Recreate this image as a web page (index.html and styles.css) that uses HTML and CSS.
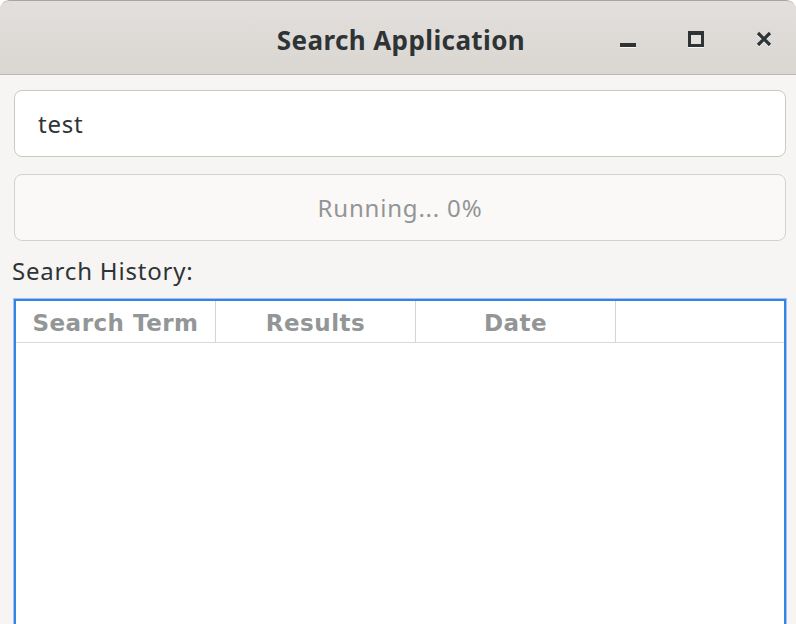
FILE: index.html
```html
<!DOCTYPE html>
<html lang="en">
<head>
    <meta charset="UTF-8">
    <title>Search Application</title>
    <link rel="stylesheet" href="styles.css">
</head>
<body>
    <div class="window">

        <!-- Header bar -->
        <div class="headerbar">
            <div></div>
            <div class="title">Search Application</div>
            <div class="controls">
                <svg class="ctl" width="16" height="18" viewBox="0 0 16 18">
                    <rect x="0" y="13" width="16" height="4" fill="#fff" opacity="0.8"/>
                    <rect x="0" y="12" width="16" height="4" fill="#2e3436"/>
                </svg>
                <svg class="ctl" width="16" height="18" viewBox="0 0 16 18">
                    <rect x="0" y="1" width="16" height="16" fill="#fff" opacity="0.8"/>
                    <rect x="0" y="0" width="16" height="16" fill="#2e3436"/>
                    <rect x="3" y="4" width="10" height="9" fill="#e4e1de"/>
                </svg>
                <svg class="ctl" width="16" height="18" viewBox="0 0 16 18">
                    <path d="M2 2 L14 14 M14 2 L2 14" stroke="#fff" stroke-width="3.2" opacity="0.7" transform="translate(0 1)"/>
                    <path d="M2 2 L14 14 M14 2 L2 14" stroke="#2e3436" stroke-width="3.2"/>
                </svg>
            </div>
        </div>

        <!-- Main content -->
        <div class="content">
            <div class="entry">test</div>
            <div class="progress-btn">Running... 0%</div>
            <div class="label">Search History:</div>

            <div class="history">
                <div class="history-head">
                    <div class="col">Search Term</div>
                    <div class="col">Results</div>
                    <div class="col">Date</div>
                    <div class="col-rest"></div>
                </div>
                <div class="history-body"></div>
            </div>
        </div>
    </div>
</body>
</html>
```

FILE: styles.css
```css
/* Base */
body {
    margin: 0;
    padding: 0;
    background-color: #ffffff;
    font-family: 'Noto Sans', 'Open Sans', sans-serif;
    color: #2e3436;
    overflow: hidden;
}

.window {
    width: 796px;
    height: 624px;
    background-color: #f6f5f4;
    border-radius: 9px 9px 0 0;
    overflow: hidden;
}

/* Header bar */
.headerbar {
    height: 73px;
    display: grid;
    grid-template-columns: 1fr auto 1fr;
    align-items: center;
    background: linear-gradient(#e2dfdc, #dad6d2);
    border-top: 1px solid #a8a6a4;
    border-bottom: 1px solid #bfb8b1;
    border-radius: 9px 9px 0 0;
}

.title {
    font-size: 26px;
    font-weight: bold;
    letter-spacing: 0.4px;
    color: #2e3436;
    padding-top: 4px;
    padding-left: 6px;
}

.controls {
    display: flex;
    justify-content: flex-end;
    align-items: center;
    gap: 52px;
    padding-right: 24px;
    padding-top: 4px;
}

.ctl {
    display: block;
}

/* Content */
.content {
    padding: 15px 10px 0 14px;
}

.entry {
    height: 65px;
    display: flex;
    align-items: center;
    padding-left: 23px;
    background-color: #ffffff;
    border: 1px solid #cdc7c2;
    border-radius: 8px;
    font-size: 24px;
    letter-spacing: 0.8px;
    color: #2e3436;
}

.progress-btn {
    height: 65px;
    margin-top: 17px;
    display: flex;
    align-items: center;
    justify-content: center;
    background-color: #faf9f8;
    border: 1px solid #d5d0cc;
    border-radius: 8px;
    font-size: 24px;
    letter-spacing: 0.8px;
    color: #929595;
}

.label {
    margin: 13px 0 0 -2px;
    height: 43px;
    font-size: 24px;
    letter-spacing: 0.8px;
    color: #2e3436;
}

/* History table */
.history {
    border: 2px solid #3584e4;
    box-shadow: 0 0 0 1px #9fc2ee;
    background-color: #ffffff;
    height: 340px;
    margin-top: 2px;
}

.history-head {
    display: flex;
    height: 41px;
    border-bottom: 1px solid #dcd8d4;
}

.history-head .col {
    width: 200px;
    box-sizing: border-box;
    border-right: 1px solid #d8d4d0;
    display: flex;
    align-items: center;
    justify-content: center;
    padding-top: 3px;
    font-family: 'DejaVu Sans', sans-serif;
    font-weight: bold;
    font-size: 23px;
    letter-spacing: 0.5px;
    color: #939696;
}

.col-rest {
    flex: 1;
}
```
